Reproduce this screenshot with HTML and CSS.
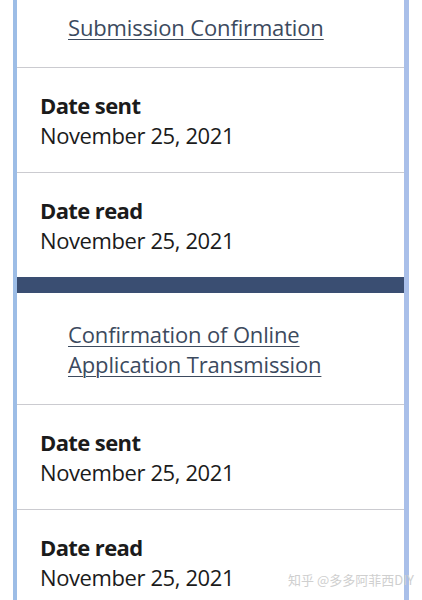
FILE: index.html
```html
<!DOCTYPE html>
<html lang="en">
<head>
<meta charset="utf-8">
<title>Messages</title>
<link rel="stylesheet" href="styles.css">
</head>
<body>
<div class="page">
  <section class="doc">
    <div class="row link-row"><a class="doc-link" href="#">Submission Confirmation</a></div>
    <div class="row">
      <div class="label">Date sent</div>
      <div class="value">November 25, 2021</div>
    </div>
    <div class="row last">
      <div class="label">Date read</div>
      <div class="value">November 25, 2021</div>
    </div>
  </section>
  <div class="divider-bar"></div>
  <section class="doc">
    <div class="row link-row"><a class="doc-link" href="#">Confirmation of Online Application Transmission</a></div>
    <div class="row">
      <div class="label">Date sent</div>
      <div class="value">November 25, 2021</div>
    </div>
    <div class="row last">
      <div class="label">Date read</div>
      <div class="value">November 25, 2021</div>
    </div>
  </section>
</div>
<div class="watermark">知乎 @多多阿菲西DIY</div>
</body>
</html>
```
FILE: styles.css
```css
html, body {
  margin: 0;
  padding: 0;
  background: #ffffff;
  overflow: hidden;
  height: 600px;
}
body {
  font-family: "Open Sans", "Noto Sans", sans-serif;
  color: #1b1b1b;
  position: relative;
}
.page {
  margin-left: 13px;
  width: 387px;
  margin-top: -14px;
  border-left: 4px solid #9dbde6;
  border-right: 5px solid #a9bfe9;
  background: #ffffff;
}
.row {
  padding: 22px 23px;
  border-bottom: 1px solid #cbcbd0;
  font-size: 22px;
  line-height: 30px;
}
.row.last {
  border-bottom: none;
}
.link-row {
  padding: 26px 23px 25px 51px;
}
.doc-link {
  color: #3c4a5e;
  letter-spacing: -0.15px;
  text-decoration: underline;
  text-decoration-thickness: 1px;
  text-underline-offset: 3px;
}
.label {
  font-weight: 700;
  color: #1b1b1b;
  letter-spacing: -0.6px;
}
.value {
  color: #1b1b1b;
  letter-spacing: -0.4px;
}
.divider-bar {
  height: 16px;
  background: #3a4e72;
}
.watermark {
  position: absolute;
  left: 288px;
  top: 571px;
  font-family: "Noto Sans CJK SC", "Noto Sans", sans-serif;
  font-size: 13px;
  line-height: 18px;
  color: #cfcfcf;
  white-space: nowrap;
}
```
